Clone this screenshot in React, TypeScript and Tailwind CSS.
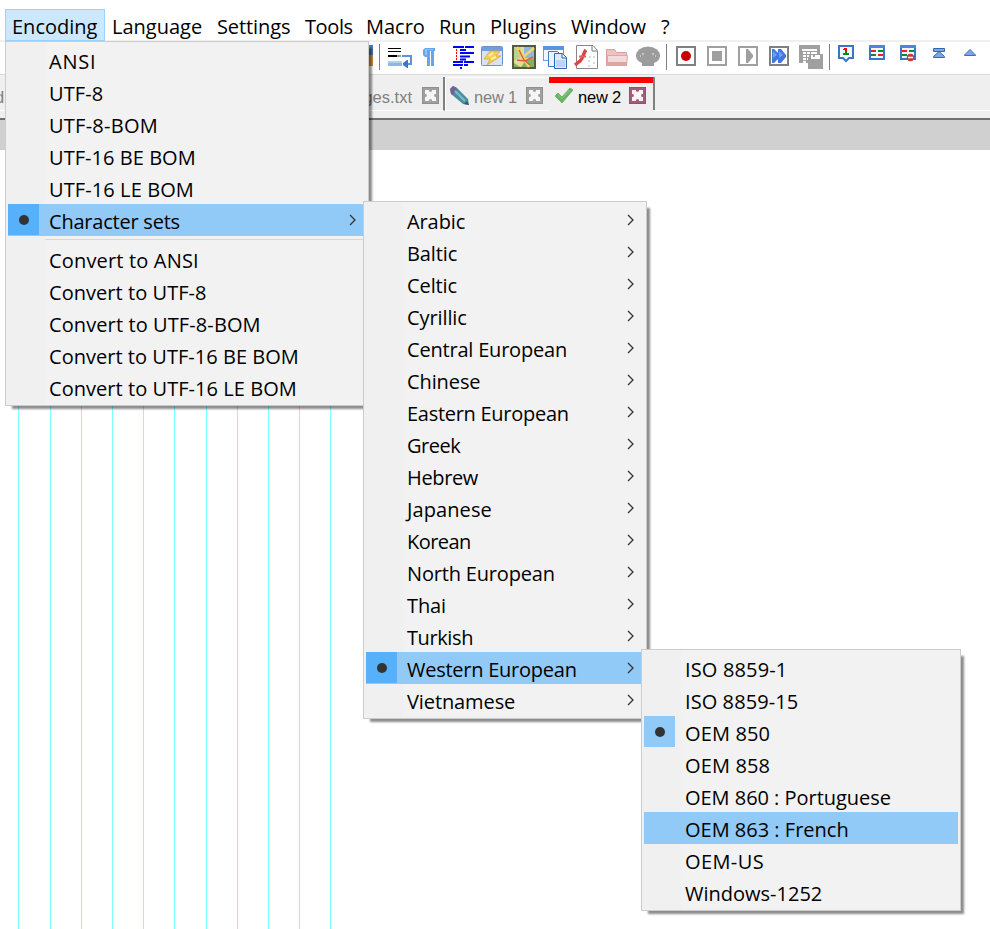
import React from 'react';
import clsx from 'clsx';

interface MenuEntry {
    label: string;
    tracking?: string;
    marked?: boolean;
    active?: boolean;
    submenu?: boolean;
    separatorBefore?: boolean;
}

const menuBar = [
    { label: 'Encoding', className: 'w-[100px] h-8 border border-[#99d1ff] bg-[#cce8ff] pl-[6px] leading-[33px] tracking-normal' },
    { label: 'Language', className: 'w-[105px] pl-[7px] tracking-normal' },
    { label: 'Settings', className: 'w-[88px] pl-[7px]' },
    { label: 'Tools', className: 'w-[62px] pl-[7px] tracking-[-0.4px]' },
    { label: 'Macro', className: 'w-[73px] pl-[6px] tracking-normal' },
    { label: 'Run', className: 'w-[50px] pl-[6px]' },
    { label: 'Plugins', className: 'w-[81px] pl-[7px]' },
    { label: 'Window', className: 'w-[90px] pl-[7px]' },
    { label: '?', className: 'w-[25px] pl-[7px]' }
];

const encodingMenu: MenuEntry[] = [
    { label: 'ANSI', tracking: 'tracking-[0.8px]' },
    { label: 'UTF-8', tracking: 'tracking-[0.1px]' },
    { label: 'UTF-8-BOM', tracking: 'tracking-[0.25px]' },
    { label: 'UTF-16 BE BOM', tracking: 'tracking-[0.05px]' },
    { label: 'UTF-16 LE BOM', tracking: 'tracking-[0.1px]' },
    { label: 'Character sets', tracking: 'tracking-[-0.22px]', marked: true, active: true, submenu: true },
    { label: 'Convert to ANSI', tracking: 'tracking-[0.17px]', separatorBefore: true },
    { label: 'Convert to UTF-8', tracking: 'tracking-[0.05px]' },
    { label: 'Convert to UTF-8-BOM', tracking: 'tracking-[0.1px]' },
    { label: 'Convert to UTF-16 BE BOM', tracking: 'tracking-[0.03px]' },
    { label: 'Convert to UTF-16 LE BOM', tracking: 'tracking-[0.05px]' }
];

const charsetMenu: MenuEntry[] = [
    { label: 'Arabic', submenu: true },
    { label: 'Baltic', submenu: true },
    { label: 'Celtic', submenu: true },
    { label: 'Cyrillic', submenu: true },
    { label: 'Central European', tracking: 'tracking-[-0.2px]', submenu: true },
    { label: 'Chinese', submenu: true },
    { label: 'Eastern European', tracking: 'tracking-[-0.28px]', submenu: true },
    { label: 'Greek', tracking: 'tracking-[-0.5px]', submenu: true },
    { label: 'Hebrew', tracking: 'tracking-[-0.35px]', submenu: true },
    { label: 'Japanese', tracking: 'tracking-[0.1px]', submenu: true },
    { label: 'Korean', tracking: 'tracking-[-0.55px]', submenu: true },
    { label: 'North European', tracking: 'tracking-[-0.18px]', submenu: true },
    { label: 'Thai', submenu: true },
    { label: 'Turkish', tracking: 'tracking-[-0.4px]', submenu: true },
    { label: 'Western European', tracking: 'tracking-[-0.25px]', marked: true, active: true, submenu: true },
    { label: 'Vietnamese', submenu: true }
];

const westernMenu: MenuEntry[] = [
    { label: 'ISO 8859-1', tracking: 'tracking-[0.15px]' },
    { label: 'ISO 8859-15', tracking: 'tracking-[0.08px]' },
    { label: 'OEM 850', tracking: 'tracking-[0.15px]', marked: true },
    { label: 'OEM 858', tracking: 'tracking-[0.15px]' },
    { label: 'OEM 860 : Portuguese', tracking: 'tracking-[-0.03px]' },
    { label: 'OEM 863 : French', tracking: 'tracking-normal', active: true },
    { label: 'OEM-US', tracking: 'tracking-[0.4px]' },
    { label: 'Windows-1252', tracking: 'tracking-normal' }
];

const Icon: React.FC<{ children: React.ReactNode }> = ({ children }) => (
    <svg width="31" height="32" viewBox="0 0 31 32" fill="none" className="shrink-0">
        {children}
    </svg>
);

const WrapIcon = () => (
    <Icon>
        <path d="M3 6.5h13M3 9.5h13" stroke="#000" />
        <path d="M3 14h9" stroke="#000" strokeWidth="2" />
        <path d="M12 14h4" stroke="#999" strokeWidth="2" />
        <path d="M3 19h14v5H3z" fill="#8cb4ee" />
        <path d="M3 19h14v2H3z" fill="#b4cff6" />
        <path d="M17 14h9v8h-4" stroke="#5f93d4" strokeWidth="2" />
        <path d="M23 18v8h-1l-4-3v-2l4-3z" fill="#3d78c0" />
    </Icon>
);

const PilcrowIcon = () => (
    <Icon>
        <path d="M9 6h10v3h-1v15h-3V9h-1v15h-3v-9H9L7 13V8z" fill="#67a5ee" />
        <path d="M9 7h8v1H9zM9 8h2v5H9z" fill="#8cc4f8" />
    </Icon>
);

const OutlineIcon = () => (
    <Icon>
        <path d="M6 5h11M18 5h9M13 8h6M13 11h14M13 14.5h10M13 17.5h6M6 20h10M17 20h10M6 23h10M17 23h4M13 26h2" stroke="#00f" strokeWidth="2" />
        <path d="M9.5 7v12" stroke="#f00" strokeDasharray="2 1" />
    </Icon>
);

const BoltWindowIcon = () => (
    <Icon>
        <rect x="3.5" y="4.5" width="21" height="19" rx="1" fill="#d5e4f5" stroke="#6b93c6" />
        <path d="M4 5h20v4H4z" fill="#6d9fdf" />
        <path d="M12 9h10l-4 5h5L9 23l3-6H6z" fill="#f4cf4b" stroke="#dca73d" strokeWidth=".8" />
        <path d="M11 14l4-3M13 17l5-2" stroke="#fff3a5" strokeWidth="2" />
    </Icon>
);

const MapIcon = () => (
    <Icon>
        <rect x="4" y="4" width="22" height="22" fill="#e8dc90" stroke="#555842" strokeWidth="2" />
        <path d="M15 5h10v11H15z" fill="#8fb8dc" />
        <path d="M5 5h6l2 9-8 5z" fill="#b8d48c" />
        <path d="M5 21l6 4H5zM17 18l8-2v9H12z" fill="#7db562" />
        <path d="M8 5l5 9 7 11M14 15L25 6" stroke="#f4d660" strokeWidth="2.5" />
        <path d="M10 8l5 10M8 18l8 1 8-4M15 18l6 5" stroke="#dc6040" strokeWidth="1.5" />
    </Icon>
);

const WindowsIcon = () => (
    <Icon>
        <rect x="3.5" y="4.5" width="20" height="14" fill="#f4f8fd" stroke="#6a9ddb" />
        <path d="M3 4h21v4H3z" fill="#5b95df" />
        <path d="M8.5 9.5h9l3 3v12h-12z" fill="#eaf2fc" stroke="#4379bd" />
        <path d="M14.5 11.5h8l4 4v11h-12z" fill="#deebfb" stroke="#3468ac" />
        <path d="M22 12v4h4" stroke="#3468ac" />
        <path d="M16 18h9v7h-9z" fill="#b9d5f7" />
    </Icon>
);

const FunctionIcon = () => (
    <Icon>
        <path d="M7 3.5h15l4.5 5v18H5.5v-23z" fill="#fff" stroke="#888" />
        <path d="M21 4v5h5" stroke="#777" />
        <path d="M15 8c-3 3-2 7-6 11l-5 4" stroke="#d94444" strokeWidth="3.5" />
        <path d="M8 14.5h7" stroke="#e06060" strokeWidth="2" />
        <path d="M18 15h2M22 15h2M17 19h2M22 21h2M17 24h2" stroke="#c8d4c8" strokeWidth="1.5" />
    </Icon>
);

const FolderIcon = () => (
    <Icon>
        <path d="M4.5 23.5v-16h8l2 3h10v13z" fill="#edc2c2" stroke="#d9a0a0" />
        <path d="M5.5 13.5h20l-1 9.5h-19z" fill="#f4dada" stroke="#dba8a8" />
        <path d="M6 20h19v3H6z" fill="#dfa4a4" />
    </Icon>
);

const MonitorIcon = () => (
    <Icon>
        <ellipse cx="15" cy="13.5" rx="12" ry="9" fill="#9c9c9c" />
        <path d="M9 20h12v4H9z" fill="#9c9c9c" />
        <path d="M7 14h1M9 12h2M19 12h2M22 14h1" stroke="#ededed" />
    </Icon>
);

const RecordIcon = () => (
    <Icon>
        <rect x="6" y="5" width="18" height="18" fill="#fff" stroke="#808080" strokeWidth="2" />
        <circle cx="15" cy="14" r="5" fill="#c80000" />
    </Icon>
);

const StopIcon = () => (
    <Icon>
        <rect x="6" y="5" width="18" height="18" fill="#fff" stroke="#a0a0a0" strokeWidth="2" />
        <path d="M10 9h10v10H10z" fill="#a0a0a0" />
    </Icon>
);

const PlayIcon = () => (
    <Icon>
        <rect x="6" y="5" width="18" height="18" fill="#fff" stroke="#a0a0a0" strokeWidth="2" />
        <path d="M13 7h2l5 6v2l-5 6h-2z" fill="#a0a0a0" />
    </Icon>
);

const FastForwardIcon = () => (
    <Icon>
        <rect x="6" y="5" width="18" height="18" fill="#fff" stroke="#808080" strokeWidth="2" />
        <path d="M8 7h2l4 4V7h3l5 6v2l-5 6h-3v-4l-4 4H8z" fill="#3f78d8" />
        <path d="M9 9l4 4-4 3zM15 9l4 4-4 3z" fill="#6da3ee" />
    </Icon>
);

const SaveMacroIcon = () => (
    <Icon>
        <path d="M4 3h21v9h3v15H13v-6H4z" fill="#a0a0a0" />
        <path d="M7 7h15v2H7zM8 10h3v2H8zM12 10h3v2h-3zM16 10h6v2h-6zM8 13h3v2H8zM12 13h2v2h-2zM8 16h3v2H8zM12 16h1v2h-1zM8 19h3v2H8z" fill="#fff" />
        <path d="M16 13h9v4h-9z" fill="#fff" />
        <path d="M18 13h2v2h-2z" fill="#a0a0a0" />
    </Icon>
);

const BookmarkIcon = () => (
    <Icon>
        <path d="M8 4h14v12h-4l-3 3-3-3H8z" fill="#f2f5fa" stroke="#3d74c8" strokeWidth="2" />
        <path d="M13 6h3v4h-2V8h-2V7h1z" fill="#f00" />
        <path d="M14 10h2v1h2v2h-6v-2h2z" fill="#008c20" />
    </Icon>
);

const CompareIcon = () => (
    <Icon>
        <rect x="8" y="4" width="14" height="13" fill="#f1f6fd" stroke="#3d74c8" strokeWidth="2" />
        <path d="M7 3h16v3H7z" fill="#4a86da" />
        <path d="M9 9h5M16 13h5" stroke="#ed2020" strokeWidth="2" />
        <path d="M16 9h5M9 13h5" stroke="#078c20" strokeWidth="2" />
    </Icon>
);

const CompareClearIcon = () => (
    <Icon>
        <rect x="8" y="4" width="14" height="13" fill="#f1f6fd" stroke="#3d74c8" strokeWidth="2" />
        <path d="M7 3h16v3H7z" fill="#4a86da" />
        <path d="M9 9h5" stroke="#ed2020" strokeWidth="2" />
        <path d="M16 9h5M9 13h5" stroke="#078c20" strokeWidth="2" />
        <circle cx="17.5" cy="15.5" r="3.7" fill="#c33b3b" />
        <path d="M15 15.5h5" stroke="#fff" strokeWidth="1.5" />
    </Icon>
);

const FirstIcon = () => (
    <Icon>
        <path d="M9.5 6.5h11v3h-11zM15 9.5l5.5 5v1h-11v-1z" fill="#7da8e4" stroke="#3468ac" />
    </Icon>
);

const PreviousIcon = () => (
    <Icon>
        <path d="M15 7.5l5.5 5.5v.5h-11V13z" fill="#7da8e4" stroke="#3c6fb4" />
    </Icon>
);

const CloseIcon: React.FC<{ className: string }> = ({ className }) => (
    <svg width="17" height="17" viewBox="0 0 17 17" className={className}>
        <rect width="17" height="17" fill="currentColor" />
        <path d="M3 3h4l1.5 2L10 3h4v4l-2 1.5 2 1.5v4h-4l-1.5-2L7 14H3v-4l2-1.5L3 7z" fill="#f6f6f6" />
        <path d="M7 3h3v1.5H7zM7 12.5h3V14H7zM3 7h1.5v3H3zM12.5 7H14v3h-1.5z" fill="currentColor" />
        <path d="M.5.5h16v16H.5z" fill="none" stroke="#000" strokeOpacity=".1" />
    </svg>
);

const PencilIcon = () => (
    <svg width="21" height="20" viewBox="0 0 21 20" className="shrink-0">
        <path d="M1 3l3-3 4 2 11 11 1 6-6-1L2 8z" fill="#4b8f9e" />
        <path d="M1 3l3-3 4 2-4 7-2-1z" fill="#75619a" />
        <path d="M6 5l10 10" stroke="#7fbccb" strokeWidth="2" />
        <path d="M18 15l2 4-5-1z" fill="#3e566e" />
    </svg>
);

const CheckIcon = () => (
    <svg width="20" height="18" viewBox="0 0 20 18" className="shrink-0">
        <path d="M1 9l3-3 4 4 8-9 3 2L8 16z" fill="#63b35f" stroke="#6aad68" strokeWidth=".8" />
        <path d="M4 8l4 4 8-9" fill="none" stroke="#7cc474" strokeWidth="1.2" />
    </svg>
);

const MenuRow: React.FC<{ entry: MenuEntry }> = ({ entry }) => (
    <>
        {entry.separatorBefore && (
            <div className="h-[7px] pt-[3px] pl-[37px]">
                <div className="h-px bg-[#d7d7d7]" />
            </div>
        )}
        <div className={clsx('flex h-8', entry.active && 'bg-[#91c9f7]')}>
            <div
                className={clsx(
                    'flex h-[31px] w-[31px] shrink-0 items-center justify-center',
                    entry.marked && (entry.active ? 'bg-[#56b0fa]' : 'bg-[#91c9f7]')
                )}
            >
                {entry.marked && <div className="size-[10px] rounded-full bg-[#333]" />}
            </div>
            <div className={clsx('ml-[10px] grow leading-[36px] whitespace-nowrap', entry.tracking)}>{entry.label}</div>
            {entry.submenu && (
                <svg width="8" height="12" viewBox="0 0 8 12" className="mt-[10px] mr-[9px]" fill="none">
                    <path d="M1 1l5 5-5 5" stroke="#333" strokeWidth="1.3" />
                </svg>
            )}
        </div>
    </>
);

const Menu: React.FC<{ entries: MenuEntry[]; className: string }> = ({ entries, className }) => (
    <div
        className={clsx(
            'absolute border border-[#ccc] bg-[#f2f2f2] bg-linear-to-r from-[#f0f0f0] from-[39px] to-[#f2f2f2] to-[39px] p-[2px] shadow-[5px_5px_2px_-2px_rgba(0,0,0,0.45)]',
            className
        )}
    >
        {entries.map(entry => (
            <MenuRow key={entry.label} entry={entry} />
        ))}
    </div>
);

const App: React.FC = () => {
    return (
        <div className="relative flex h-[929px] w-[990px] flex-col overflow-hidden bg-white font-['Open_Sans',sans-serif] text-[20px] tracking-[-0.1px] text-black">
            <div className="flex h-[42px] shrink-0 border-b-2 border-[#f0f0f0] pt-[9px] pl-[5px]">
                {menuBar.map(item => (
                    <div key={item.label} className={clsx('relative z-10 shrink-0', item.label !== 'Encoding' && 'leading-[35px]', item.className)}>
                        {item.label}
                    </div>
                ))}
            </div>

            <div className="flex h-[33px] shrink-0 border-b border-[#d9d9d9] pl-[360px]">
                <div className="mt-[3px] h-[21px] w-[13px] bg-linear-to-b from-[#4f78b0] from-50% to-[#d8963a] to-50%" />
                <div className="mt-[2px] mr-[5px] ml-[6px] h-[26px] w-px bg-[#808080]" />
                <WrapIcon />
                <PilcrowIcon />
                <OutlineIcon />
                <BoltWindowIcon />
                <MapIcon />
                <WindowsIcon />
                <FunctionIcon />
                <FolderIcon />
                <MonitorIcon />
                <div className="mt-[2px] mr-[4px] ml-[2px] h-[26px] w-px bg-[#808080]" />
                <RecordIcon />
                <StopIcon />
                <PlayIcon />
                <FastForwardIcon />
                <SaveMacroIcon />
                <div className="mt-[2px] mr-[1px] ml-[3px] h-[26px] w-px bg-[#808080]" />
                <BookmarkIcon />
                <CompareIcon />
                <CompareClearIcon />
                <FirstIcon />
                <PreviousIcon />
            </div>

            <div className="flex h-[43px] shrink-0 bg-[#efefef] pt-[2px] font-['Liberation_Sans',Arial,sans-serif] text-[16.5px] tracking-[-0.2px] text-[#808080]">
                <div className="flex h-[34px] w-[445px] border-r-2 border-b border-r-[#808080] border-b-white">
                    <span className="w-[300px] leading-[40px]"><span className="-ml-[5px]">d</span></span>
                    <span className="w-[112px] text-right leading-[40px] tracking-normal">pages.txt</span>
                    <CloseIcon className="mt-[10px] ml-[10px] text-[#a0a0a0]" />
                </div>
                <div className="flex h-[34px] w-[104px] border-t border-b border-l border-white">
                    <div className="mt-[8px] ml-[3px]"><PencilIcon /></div>
                    <span className="ml-[4px] w-[52px] leading-[38px]">new 1</span>
                    <CloseIcon className="mt-[9px] text-[#a0a0a0]" />
                </div>
                <div className="flex h-[33px] w-[106px] border-r-2 border-[#808080] text-black">
                    <div className="flex h-full w-[104px] border-t-[6px] border-[#f00]">
                        <div className="mt-[4px] ml-[5px]"><CheckIcon /></div>
                        <span className="ml-[4px] w-[51px] leading-[28px]">new 2</span>
                        <CloseIcon className="mt-[4px] text-[#a75a7c]" />
                    </div>
                </div>
                <div className="h-[34px] grow border-b border-white" />
            </div>
            <div className="h-[32px] shrink-0 border-t-2 border-[#707070] bg-[#d0d0d0]" />

            <div className="flex grow pl-[18.4px]">
                {Array.from({ length: 11 }, (_, i) => (
                    <div key={i} className="w-[31.2px] border-l border-[#80ffff]" />
                ))}
            </div>

            <Menu entries={encodingMenu} className="top-[41px] left-[5px] w-[364px]" />
            <Menu entries={charsetMenu} className="top-[201px] left-[363px] w-[284px]" />
            <Menu entries={westernMenu} className="top-[649px] left-[641px] w-[320px]" />
        </div>
    );
};

export default App;
